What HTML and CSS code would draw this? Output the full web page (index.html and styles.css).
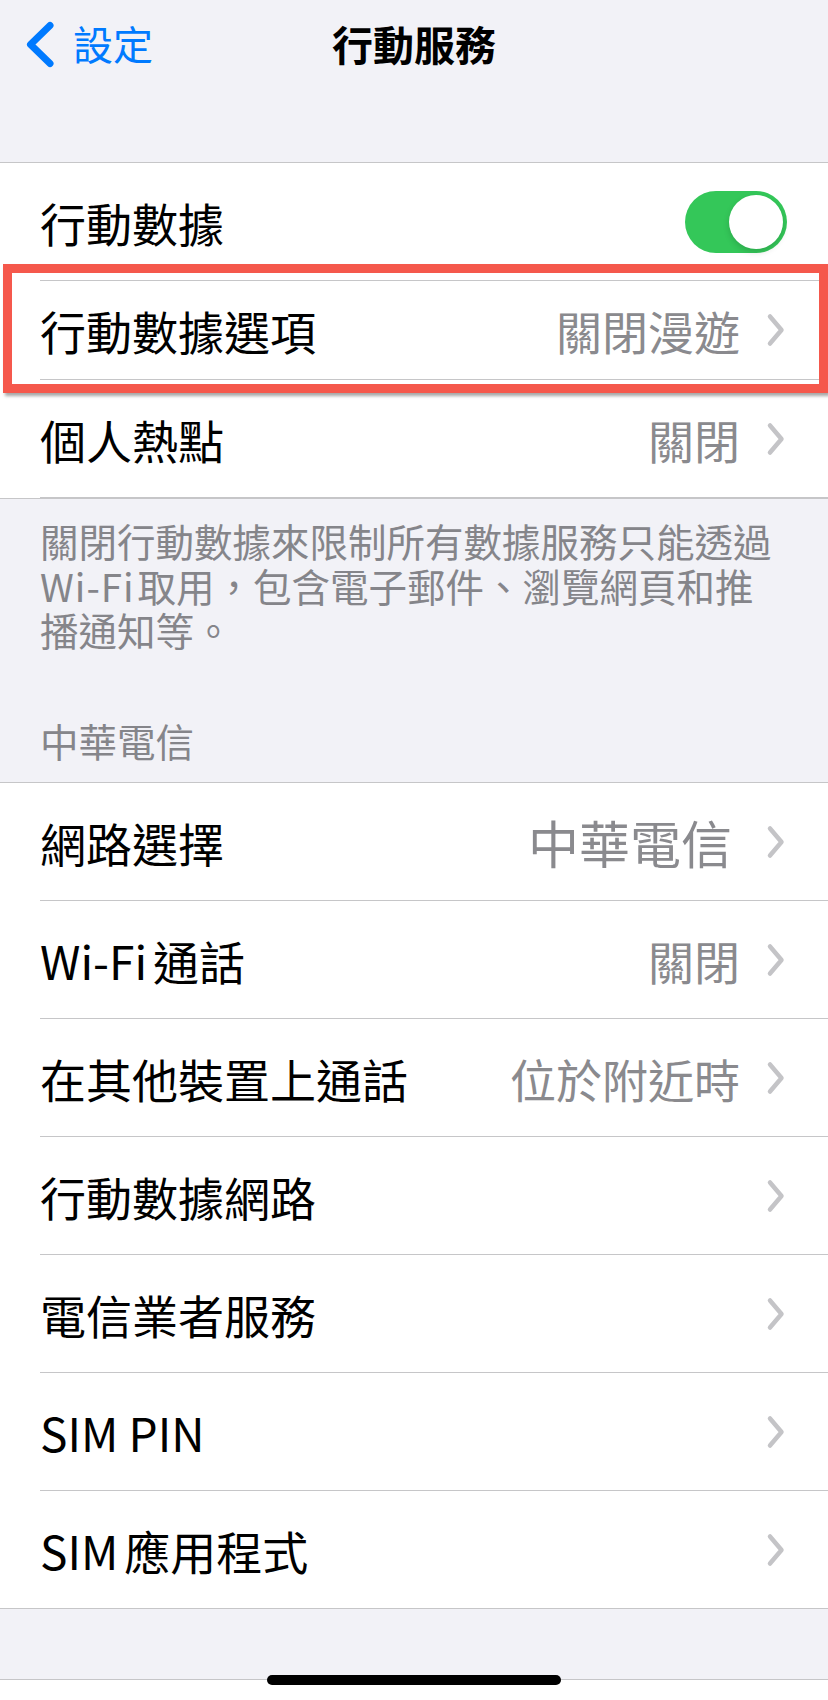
FILE: index.html
```html
<!DOCTYPE html>
<html lang="zh-Hant">
<head>
  <meta charset="UTF-8">
  <meta name="viewport" content="width=device-width, initial-scale=1.0">
  <title>行動服務</title>
  <link rel="stylesheet" href="styles.css">
</head>
<body>
  <!-- Navigation bar -->
  <header class="nav">
    <a class="back">
      <svg class="back-icon" width="32" height="50" viewBox="0 0 32 50">
        <path d="M26 6.5 L6.5 25.5 L26 44.5" />
      </svg>
      <span>設定</span>
    </a>
    <h1 class="nav-title">行動服務</h1>
    <span></span>
  </header>

  <!-- Cellular data group -->
  <section class="group">
    <div class="row">
      <div class="row-inner">
        <span class="label">行動數據</span>
        <span class="switch"></span>
      </div>
    </div>
    <div class="row row-short">
      <div class="row-inner">
        <span class="label">行動數據選項</span>
        <span class="value">關閉漫遊</span>
        <svg class="chevron" width="20" height="34" viewBox="0 0 20 34"><path d="M5 3.5 L16.5 17 L5 30.5" /></svg>
      </div>
    </div>
    <div class="row">
      <div class="row-inner">
        <span class="label">個人熱點</span>
        <span class="value">關閉</span>
        <svg class="chevron" width="20" height="34" viewBox="0 0 20 34"><path d="M5 3.5 L16.5 17 L5 30.5" /></svg>
      </div>
    </div>
    <div class="highlight"></div>
  </section>

  <p class="group-footer">關閉行動數據來限制所有數據服務只能透過<span class="latin">Wi-Fi</span>取用，包含電子郵件、瀏覽網頁和推<br>播通知等。</p>

  <h2 class="group-header">中華電信</h2>

  <!-- Carrier group -->
  <section class="group">
    <div class="row">
      <div class="row-inner">
        <span class="label">網路選擇</span>
        <span class="value value-large">中華電信</span>
        <svg class="chevron" width="20" height="34" viewBox="0 0 20 34"><path d="M5 3.5 L16.5 17 L5 30.5" /></svg>
      </div>
    </div>
    <div class="row">
      <div class="row-inner">
        <span class="label"><span class="latin">Wi-Fi</span>通話</span>
        <span class="value">關閉</span>
        <svg class="chevron" width="20" height="34" viewBox="0 0 20 34"><path d="M5 3.5 L16.5 17 L5 30.5" /></svg>
      </div>
    </div>
    <div class="row">
      <div class="row-inner">
        <span class="label">在其他裝置上通話</span>
        <span class="value">位於附近時</span>
        <svg class="chevron" width="20" height="34" viewBox="0 0 20 34"><path d="M5 3.5 L16.5 17 L5 30.5" /></svg>
      </div>
    </div>
    <div class="row">
      <div class="row-inner">
        <span class="label">行動數據網路</span>
        <svg class="chevron" width="20" height="34" viewBox="0 0 20 34"><path d="M5 3.5 L16.5 17 L5 30.5" /></svg>
      </div>
    </div>
    <div class="row">
      <div class="row-inner">
        <span class="label">電信業者服務</span>
        <svg class="chevron" width="20" height="34" viewBox="0 0 20 34"><path d="M5 3.5 L16.5 17 L5 30.5" /></svg>
      </div>
    </div>
    <div class="row">
      <div class="row-inner">
        <span class="label">SIM PIN</span>
        <svg class="chevron" width="20" height="34" viewBox="0 0 20 34"><path d="M5 3.5 L16.5 17 L5 30.5" /></svg>
      </div>
    </div>
    <div class="row">
      <div class="row-inner">
        <span class="label"><span class="latin">SIM</span>應用程式</span>
        <svg class="chevron" width="20" height="34" viewBox="0 0 20 34"><path d="M5 3.5 L16.5 17 L5 30.5" /></svg>
      </div>
    </div>
  </section>

  <div class="bottom-bar">
    <span class="home-indicator"></span>
  </div>
</body>
</html>
```

FILE: styles.css
```css
body {
  font-family: "Noto Sans CJK TC", "Noto Sans", sans-serif;
  margin: 0;
  padding: 0;
  background: #f2f2f7;
  color: #000;
}
.nav {
  height: 162px;
  box-sizing: border-box;
  padding-top: 18px;
  display: grid;
  grid-template-columns: 1fr auto 1fr;
  align-items: start;
}
.back {
  display: flex;
  align-items: center;
  height: 50px;
  padding-left: 24px;
  color: #007aff;
  font-size: 40px;
  line-height: 50px;
  cursor: pointer;
}
.back-icon {
  margin-top: 2px;
  margin-right: 17px;
}
.back-icon path {
  fill: none;
  stroke: #007aff;
  stroke-width: 7;
  stroke-linecap: round;
  stroke-linejoin: round;
}
.nav-title {
  margin: 0;
  font-size: 41px;
  line-height: 50px;
  font-weight: bold;
}
.group {
  position: relative;
  background: #fff;
  border-top: 1px solid #c6c6c8;
  border-bottom: 1px solid #c6c6c8;
}
.row {
  padding-left: 40px;
}
.row-inner {
  display: flex;
  align-items: center;
  height: 117px;
  padding-right: 43px;
  border-bottom: 1px solid #c6c6c8;
}
.row:last-of-type .row-inner {
  border-bottom: none;
}
.row-short .row-inner {
  height: 98px;
}
.label {
  flex: 1;
  font-size: 46px;
  line-height: 56px;
}
.latin {
  margin-right: 6px;
}
.value {
  font-size: 46px;
  line-height: 56px;
  color: #8a8a8e;
  margin-right: 25px;
}
.value-large {
  font-size: 51px;
  margin-right: 33px;
}
.chevron path {
  fill: none;
  stroke: #c4c4c7;
  stroke-width: 4.5;
  stroke-linecap: round;
  stroke-linejoin: round;
}
.switch {
  position: relative;
  width: 102px;
  height: 62px;
  margin-right: -2px;
  border-radius: 31px;
  background: #34c759;
}
.switch::after {
  content: "";
  position: absolute;
  top: 4px;
  right: 4px;
  width: 54px;
  height: 54px;
  border-radius: 50%;
  background: #fff;
  box-shadow: 0 3px 6px rgba(0, 0, 0, 0.15);
}
.highlight {
  position: absolute;
  top: 101px;
  left: 3px;
  right: 0;
  height: 129px;
  border: 9px solid #f5584c;
  box-sizing: border-box;
  box-shadow: 2px 3px 3px rgba(0, 0, 0, 0.35);
}
.group-footer {
  margin: 0;
  padding: 19px 48px 0 40px;
  font-size: 38.5px;
  line-height: 44.5px;
  color: #85858a;
}
.group-footer .latin {
  letter-spacing: 1px;
  margin-right: 3px;
}
.group-header {
  margin: 66px 0 0;
  padding: 0 40px 20px;
  font-size: 38.5px;
  line-height: 44.5px;
  font-weight: normal;
  color: #85858a;
}
.bottom-bar {
  position: relative;
  margin-top: 70px;
  height: 60px;
  background: #fff;
  border-top: 1px solid #c6c6c8;
}
.home-indicator {
  position: absolute;
  top: -5px;
  left: 267px;
  width: 294px;
  height: 10px;
  border-radius: 5px;
  background: #000;
}
```
